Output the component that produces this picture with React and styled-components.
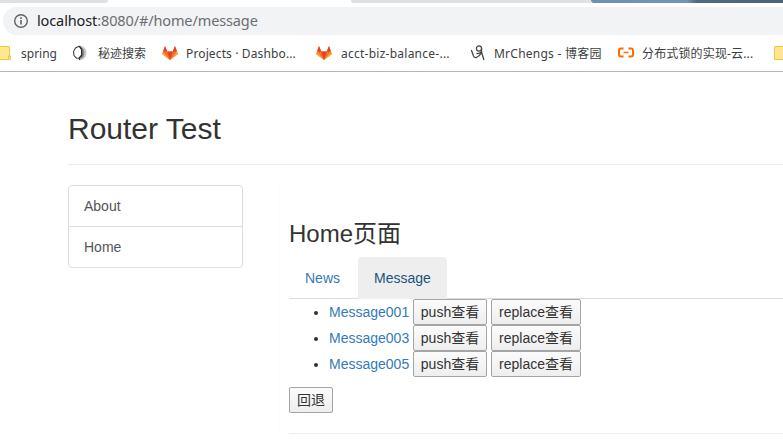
import React from "react";
import styled, { createGlobalStyle } from "styled-components";

const GlobalStyle = createGlobalStyle`
  * { box-sizing: border-box; }
  body { margin: 0; background: #fff; overflow: hidden; }
`;

const Window = styled.div`
  width: 783px;
  height: 439px;
  overflow: hidden;
  background: #fff;
  color: #333;
  font: 14px/20px "Liberation Sans", "Noto Sans CJK SC", sans-serif;
`;

const TabStrip = styled.div`
  display: flex;
  height: 3px;
`;

const StripPiece = styled.div`
  width: ${(p) => p.$w}px;
  height: 3px;
  background: ${(p) => p.$bg};
  border-radius: ${(p) => p.$radius || 0};
`;

const AddressRow = styled.div`
  padding: 4px 0 0 3px;
  height: 32px;
`;

const AddressBar = styled.div`
  display: flex;
  align-items: center;
  height: 28px;
  padding-left: 10px;
  gap: 8px;
  border-radius: 14px 0 0 14px;
  background: #f1f3f4;
`;

const Url = styled.div`
  margin-top: -2px;
  font: 14.5px/20px "Noto Sans", sans-serif;
  letter-spacing: ${(p) => p.$spacing}px;
  color: #6b6e72;
  white-space: nowrap;
`;

const Host = styled.span`
  color: #202124;
`;

const BookmarkBar = styled.div`
  display: flex;
  align-items: center;
  height: 37px;
  border-bottom: 1px solid #b3b5b6;
`;

const Bookmark = styled.div`
  display: flex;
  align-items: center;
  flex: none;
  width: ${(p) => p.$w}px;
  height: 36px;
  svg { flex: none; }
`;

const BookmarkLabel = styled.span`
  margin-left: ${(p) => p.$gap}px;
  padding-top: 1px;
  font: 12px/18px "Noto Sans", "Noto Sans CJK SC", sans-serif;
  letter-spacing: ${(p) => p.$spacing || 0}px;
  color: #3c4043;
  white-space: nowrap;
`;

const Page = styled.main`
  padding: 33px 0 0 68px;
`;

const PageHeader = styled.header`
  height: 60px;
  border-bottom: 1px solid #eee;
  padding-top: 7px;
`;

const Title = styled.h2`
  margin: 0;
  font-size: 30px;
  line-height: 33px;
  font-weight: 400;
`;

const Columns = styled.div`
  display: flex;
  padding-top: 20px;
`;

const ListGroup = styled.nav`
  width: 175px;
  height: 83px;
  border: 1px solid #ddd;
  border-radius: 4px;
`;

const ListItem = styled.a`
  display: block;
  height: 40px;
  padding: 10px 15px;
  color: #555;
  & + & {
    height: 41px;
    border-top: 1px solid #ddd;
  }
`;

const Panel = styled.section`
  flex: 1;
  margin-left: 36px;
  padding: 35px 0 0 9px;
  border-left: 1px solid #fcfcfc;
`;

const Heading = styled.h3`
  margin: 0;
  height: 37px;
  font-size: 24px;
  line-height: 27px;
  font-weight: 400;
`;

const Tabs = styled.nav`
  display: flex;
  gap: 2px;
  height: 42px;
  border-bottom: 1px solid #ddd;
`;

const Tab = styled.a`
  height: 42px;
  padding: 11px 16px;
  border-radius: 4px 4px 0 0;
  color: ${(p) => (p.$active ? "#23527c" : "#337ab7")};
  background: ${(p) => (p.$active ? "#eee" : "transparent")};
`;

const Messages = styled.ul`
  margin: 0 0 10px;
  padding-left: 40px;
`;

const Message = styled.li`
  height: 26px;
  line-height: 26px;
`;

const MessageRow = styled.div`
  display: flex;
  align-items: center;
  gap: 4px;
`;

const MessageLink = styled.a`
  width: 80px;
  color: #337ab7;
`;

const Button = styled.button`
  width: ${(p) => p.$w}px;
  height: 26px;
  padding: 0;
  border: 1px solid #a5a5a5;
  border-radius: 2px;
  background: linear-gradient(#fbfbfb, #eee);
  color: #333;
  font: 14px/20px "Liberation Sans", "Noto Sans CJK SC", sans-serif;
  white-space: nowrap;
`;

const Divider = styled.hr`
  margin: 20px 0 0;
  border: 0;
  border-top: 1px solid #eee;
`;

const InfoIcon = () => (
  <svg width="16" height="16" viewBox="0 0 16 16">
    <circle cx="8" cy="8" r="6.3" fill="none" stroke="#5f6368" strokeWidth="1.4" />
    <path d="M8 7v4.4M8 4.2v1.7" stroke="#5f6368" strokeWidth="1.6" />
  </svg>
);

const Folder = ({ w }) => (
  <svg width={w} height="15" viewBox={`0 0 ${w} 15`}>
    <path d={`M-2 .5H${w - 1.5}V10h1v3.5H-2z`} fill="#ffe68f" stroke="#e9c84c" />
    <path d={`M${w - 2.5} 13.5v-3.5h2`} fill="none" stroke="#e9c84c" />
  </svg>
);

const FolderStart = () => (
  <svg width="9" height="14" viewBox="0 0 9 14">
    <path d="M12 .5H.5v13H12z" fill="#ffe68f" stroke="#e9c84c" />
  </svg>
);

const Moon = () => (
  <svg width="16" height="16" viewBox="0 0 16 16">
    <path d="M8 .8c4 .2 6.5 3.200 6.500 7S12 14.800 8 15z" fill="#c9c9c9" />
    <path d="M9 2c2.500 1.500 3.300 3.500 3.300 6S11.500 12.500 9 14z" fill="#888" />
    <path d="M7 1.200L3.500 3 1.500 6.500 2 10.500 4.500 13.200 7 13 9.500 10V4.500z" fill="#fff" stroke="#444" strokeWidth="1.1" />
    <path d="M7.500 1l2.200 3.500v6L7 13.500l1 1.500" fill="none" stroke="#333" strokeWidth="1.2" />
  </svg>
);

const GitLab = () => (
  <svg width="16" height="16" viewBox="0 0 16 16">
    <path d="M3 1L.2 9 8 15l7.800-6L13 1l-2.200 5.500H5.200z" fill="#fc6d26" />
    <path d="M3 1L1 6.500h4.200zM13 1l2 5.500h-4.200zM5.200 6.500h5.600L8 15z" fill="#e24329" />
    <path d="M1 6.500L.2 9 8 15zM15 6.500l.8 2.500L8 15z" fill="#fca326" />
  </svg>
);

const Figure = () => (
  <svg width="16" height="16" viewBox="0 0 16 16" fill="none" stroke="#444" strokeLinecap="round">
    <circle cx="9" cy="3.5" r="2.6" strokeWidth="1.2" />
    <path d="M1.500 5.500L3.500 11q1 2 3 1.500 3-1 5-5L11.500 3M11.500 7l2.300 7.500" strokeWidth="1.3" />
    <path d="M7 8.500q2 .5 4.500-1.500" strokeWidth="1.3" />
  </svg>
);

const Cloud = () => (
  <svg width="16" height="12" viewBox="0 0 16 12" fill="none" stroke="#ff6a00" strokeWidth="2">
    <path d="M5.500 1.500H3Q1 1.500 1 3.500v4q0 2 2 2h2.500M10.500 1.500h2.500q2 0 2 2v4q0 2-2 2h-2.500" />
    <path d="M5.500 5.500h5" strokeWidth="1.5" />
  </svg>
);

const messages = ["Message001", "Message003", "Message005"];

export default function App() {
  return (
    <Window>
      <GlobalStyle />
      <TabStrip>
        <StripPiece $w={108} $bg="#dee1e6" $radius="0 0 4px 0" />
        <StripPiece $w={243} $bg="#fff" />
        <StripPiece $w={240} $bg="#dee1e6" $radius="0 0 0 4px" />
        <StripPiece $w={192} $bg="linear-gradient(90deg, #6e8fb8, #7294bd 50%, #526a83 55%, #4d6379)" $radius="0 0 0 4px" />
      </TabStrip>
      <AddressRow>
        <AddressBar>
          <InfoIcon />
          <Url $spacing={-0.12}><Host>localhost</Host>:8080/#/home/message</Url>
        </AddressBar>
      </AddressRow>
      <BookmarkBar>
        <Bookmark $w={72}><Folder w={11} /><BookmarkLabel $gap={10}>spring</BookmarkLabel></Bookmark>
        <Bookmark $w={90}><Moon /><BookmarkLabel $gap={10}>秘迹搜索</BookmarkLabel></Bookmark>
        <Bookmark $w={154}><GitLab /><BookmarkLabel $gap={8} $spacing={0.13}>Projects · Dashbo...</BookmarkLabel></Bookmark>
        <Bookmark $w={154}><GitLab /><BookmarkLabel $gap={9} $spacing={0.25}>acct-biz-balance-...</BookmarkLabel></Bookmark>
        <Bookmark $w={148}><Figure /><BookmarkLabel $gap={8} $spacing={0.24}>MrChengs - 博客园</BookmarkLabel></Bookmark>
        <Bookmark $w={156}><Cloud /><BookmarkLabel $gap={8} $spacing={0.15}>分布式锁的实现-云...</BookmarkLabel></Bookmark>
        <FolderStart />
      </BookmarkBar>
      <Page>
        <PageHeader><Title>Router Test</Title></PageHeader>
        <Columns>
          <ListGroup><ListItem>About</ListItem><ListItem>Home</ListItem></ListGroup>
          <Panel>
            <Heading>Home页面</Heading>
            <Tabs><Tab>News</Tab><Tab $active>Message</Tab></Tabs>
            <Messages>
              {messages.map((name) => (
                <Message key={name}>
                  <MessageRow>
                    <MessageLink>{name}</MessageLink>
                    <Button $w={74}>push查看</Button>
                    <Button $w={90}>replace查看</Button>
                  </MessageRow>
                </Message>
              ))}
            </Messages>
            <Button $w={44}>回退</Button>
            <Divider />
          </Panel>
        </Columns>
      </Page>
    </Window>
  );
}
